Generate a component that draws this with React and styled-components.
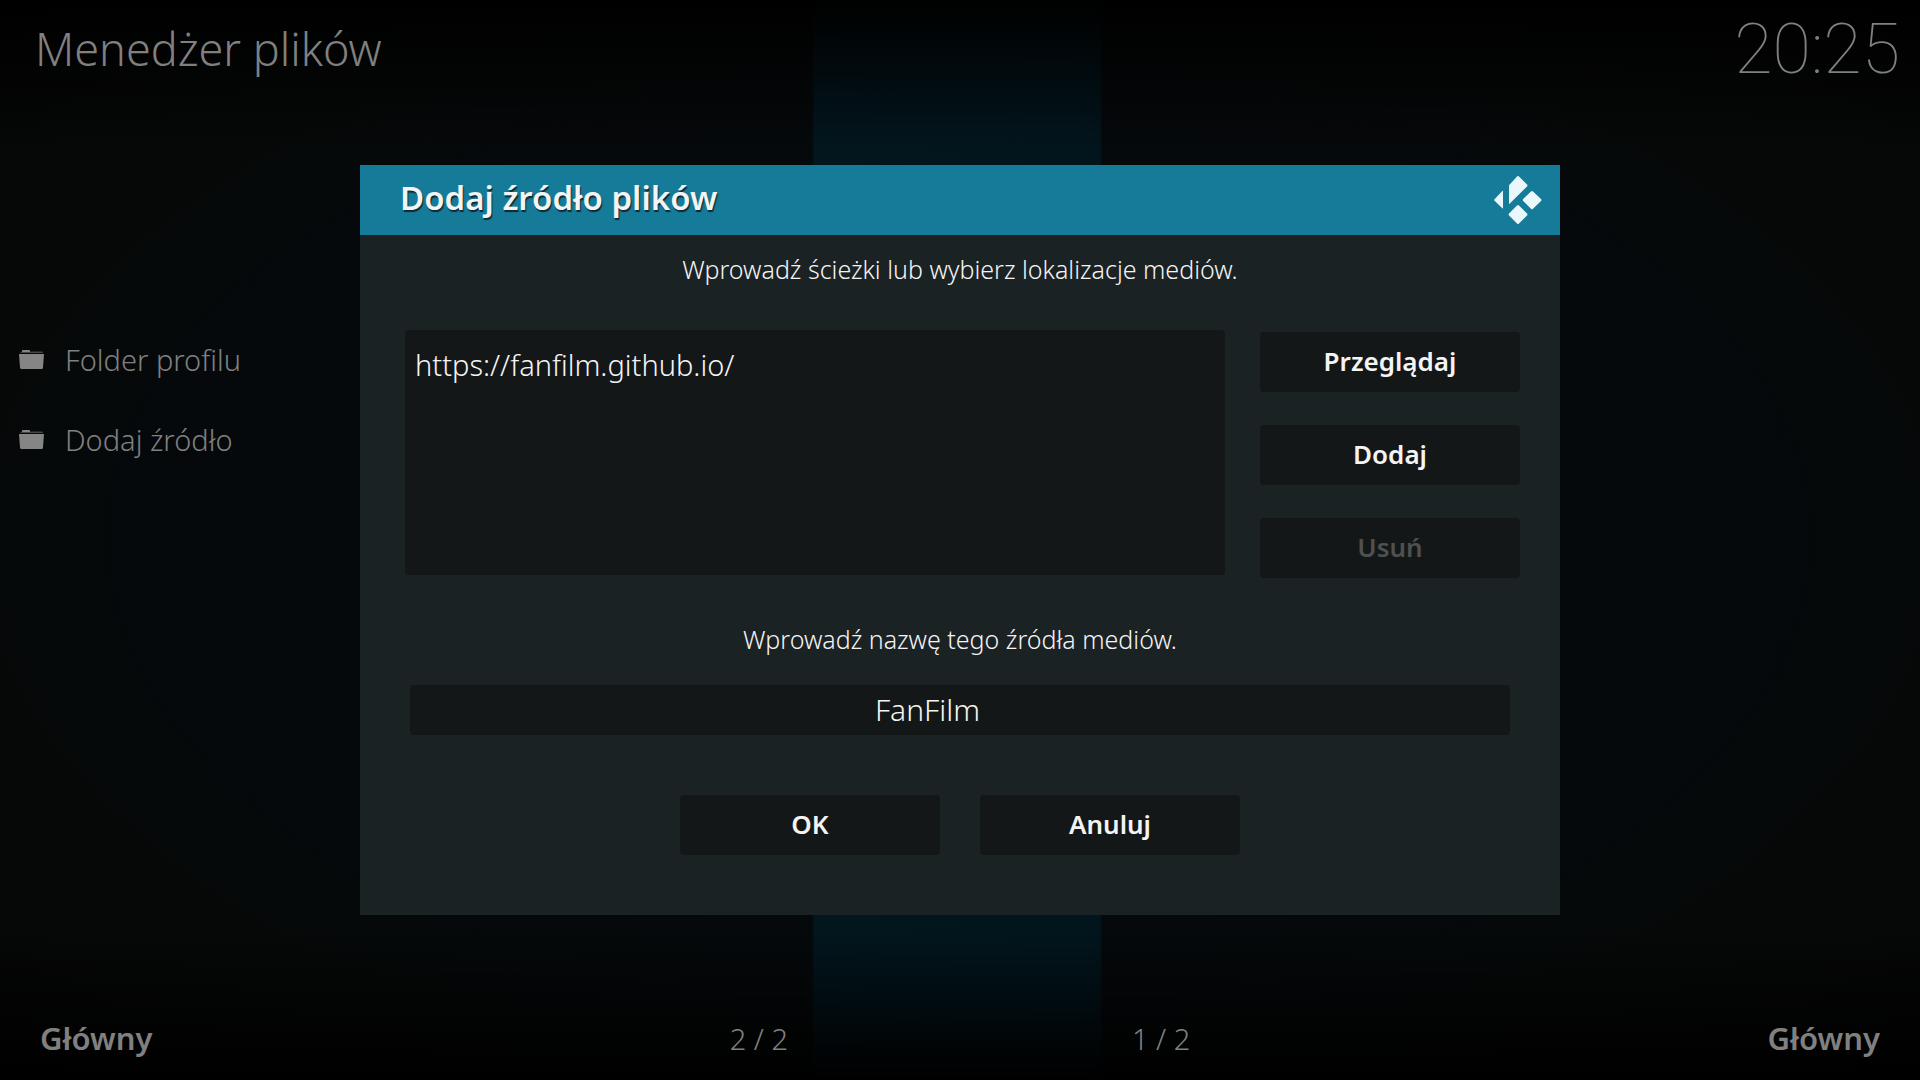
import React, { useState } from 'react';
import styled, { createGlobalStyle } from 'styled-components';

const GlobalStyle = createGlobalStyle`
  * {
    box-sizing: border-box;
  }

  body {
    margin: 0;
    background-color: #000000;
    font-family: 'Noto Sans', sans-serif;
    font-weight: 300;
  }

  button,
  input {
    font-family: inherit;
  }
`;

const Screen = styled.div`
  min-height: 100vh;
  display: flex;
  flex-direction: column;
  color: #808080;
  background:
    linear-gradient(#000000 0, transparent 150px, transparent calc(100% - 150px), #000000 100%),
    linear-gradient(90deg, transparent 42.3%, #02161e 42.4%, #02151d 57.3%, transparent 57.4%),
    radial-gradient(ellipse at center, #05090c 50%, #060808 75%, #050505 100%);
`;

const TopBar = styled.header`
  display: flex;
  justify-content: space-between;
  align-items: center;
  height: 98px;
  padding: 0 20px 0 35px;
`;

const PageTitle = styled.h1`
  margin: 0;
  font-size: 45px;
  font-weight: 300;
  line-height: 60px;
`;

const Clock = styled.time`
  font-family: Roboto, sans-serif;
  font-size: 70px;
  font-weight: 100;
`;

const FileList = styled.ul`
  flex: 1;
  margin: 0;
  padding: 221px 0 0;
  list-style: none;
`;

const FileButton = styled.button`
  display: flex;
  align-items: center;
  gap: 19px;
  width: 360px;
  height: 80px;
  padding: 0 18px;
  border: 0;
  background: none;
  color: inherit;
  font-size: 29px;
  font-weight: 300;
`;

const BottomBar = styled.footer`
  display: grid;
  grid-template-columns: 1fr 1fr;
  gap: 344px;
  height: 84px;
  padding: 0 40px;
  font-size: 29px;
`;

const PanelInfo = styled.div`
  display: flex;
  justify-content: space-between;
  align-items: center;
`;

const PanelName = styled.span`
  font-size: 31px;
  font-weight: 600;
`;

const Overlay = styled.div`
  position: fixed;
  inset: 0;
  display: flex;
  align-items: center;
  justify-content: center;
`;

const Dialog = styled.section`
  width: 62.5%;
  min-width: 900px;
  padding-bottom: 60px;
  background-color: #1b2224;
  color: #f4f4f4;
`;

const DialogHeader = styled.header`
  display: flex;
  align-items: center;
  justify-content: space-between;
  height: 70px;
  padding: 0 16px 0 40px;
  background-color: #167b98;
`;

const DialogTitle = styled.h2`
  margin: 0;
  font-size: 33px;
  font-weight: 600;
  line-height: 40px;
  padding-bottom: 4px;
  text-shadow: 1px 2px 1px #0c2a35;
`;

const Hint = styled.p`
  margin: 0;
  padding-bottom: 2px;
  font-size: 25px;
  line-height: 68px;
  text-align: center;
`;

const NameLabel = styled(Hint)`
  display: block;
  margin-top: 27px;
`;

const PathRow = styled.div`
  display: flex;
  align-items: flex-start;
  gap: 35px;
  padding: 25px 40px 0 45px;
`;

const PathList = styled.ul`
  flex: 1;
  height: 245px;
  margin: 0;
  padding: 0 10px;
  border-radius: 4px;
  background-color: #141718;
  list-style: none;
`;

const PathItem = styled.li`
  font-size: 29px;
  line-height: 70px;
`;

const ButtonColumn = styled.div`
  display: flex;
  flex-direction: column;
  gap: 33px;
  padding-top: 2px;
`;

const ButtonRow = styled.div`
  display: flex;
  justify-content: center;
  gap: 40px;
  margin-top: 60px;
`;

const Button = styled.button`
  width: 260px;
  height: 60px;
  padding: 0 0 2px;
  border: 0;
  border-radius: 4px;
  background-color: #141718;
  color: #f4f4f4;
  font-size: 26px;
  font-weight: 600;

  &:disabled {
    color: #4e5051;
  }
`;

const NameField = styled.div`
  padding: 10px 50px 0;
`;

const NameInput = styled.input`
  display: block;
  width: 100%;
  height: 50px;
  padding: 0 65px 2px 0;
  border: 0;
  border-radius: 4px;
  background-color: #141718;
  color: #f4f4f4;
  font-size: 30px;
  font-weight: 300;
  text-align: center;
`;

const FolderIcon = () => (
  <svg width="28" height="28" viewBox="0 0 28 28" fill="#858585" aria-hidden="true">
    <path d="M2 7.6 L4 6.8 V6 Q4 5 5 5 H11 Q12 5 12 6 V6.8 H24 Q25 6.8 25 7.6 Z" />
    <path d="M1 9 H26 L25 22.5 Q24.9 24 23.4 24 H3.6 Q2.1 24 2 22.5 Z" />
  </svg>
);

const KodiLogo = () => (
  <svg width="52" height="52" viewBox="0 0 52 52" fill="#eaf8fb" aria-label="Kodi">
    <path d="M11 17.4 V34 Q11 35 10.3 34.3 L2.3 26.6 Q1.7 26 2.3 25.4 L10.3 17 Q11 16.4 11 17.4 Z" />
    <path d="M17 29.2 V11.2 L25 2.4 Q26 1.4 27 2.4 L35 10.4 Q36 11.4 35 12.4 L17.8 29.6 Q17 30.4 17 29.2 Z" />
    <path d="M39 17.4 Q40 16.4 41 17.4 L49 25 Q50 26 49 27 L41 34.8 Q40 35.8 39 34.8 L31.2 27 Q30.2 26 31.2 25 Z" />
    <path d="M25 31.4 Q26 30.4 27 31.4 L35 39.4 Q36 40.4 35 41.4 L27 49.4 Q26 50.4 25 49.4 L17 41.4 Q16 40.4 17 39.4 Z" />
  </svg>
);

const files = ['Folder profilu', 'Dodaj źródło'];

const App = () => {
  const [name, setName] = useState('FanFilm');

  return (
    <>
      <GlobalStyle />
      <Screen>
        <TopBar>
          <PageTitle>Menedżer plików</PageTitle>
          <Clock>20:25</Clock>
        </TopBar>
        <FileList>
          {files.map((file) => (
            <li key={file}>
              <FileButton type="button">
                <FolderIcon />
                {file}
              </FileButton>
            </li>
          ))}
        </FileList>
        <BottomBar>
          <PanelInfo>
            <PanelName>Główny</PanelName>
            <span>2 / 2</span>
          </PanelInfo>
          <PanelInfo>
            <span>1 / 2</span>
            <PanelName>Główny</PanelName>
          </PanelInfo>
        </BottomBar>
      </Screen>
      <Overlay>
        <Dialog role="dialog" aria-labelledby="dialog-title">
          <DialogHeader>
            <DialogTitle id="dialog-title">Dodaj źródło plików</DialogTitle>
            <KodiLogo />
          </DialogHeader>
          <Hint>Wprowadź ścieżki lub wybierz lokalizacje mediów.</Hint>
          <PathRow>
            <PathList>
              <PathItem>https://fanfilm.github.io/</PathItem>
            </PathList>
            <ButtonColumn>
              <Button type="button">Przeglądaj</Button>
              <Button type="button">Dodaj</Button>
              <Button type="button" disabled>
                Usuń
              </Button>
            </ButtonColumn>
          </PathRow>
          <NameLabel as="label" htmlFor="source-name">
            Wprowadź nazwę tego źródła mediów.
          </NameLabel>
          <NameField>
            <NameInput id="source-name" value={name} onChange={(e) => setName(e.target.value)} />
          </NameField>
          <ButtonRow>
            <Button type="button">OK</Button>
            <Button type="button">Anuluj</Button>
          </ButtonRow>
        </Dialog>
      </Overlay>
    </>
  );
};

export default App;
